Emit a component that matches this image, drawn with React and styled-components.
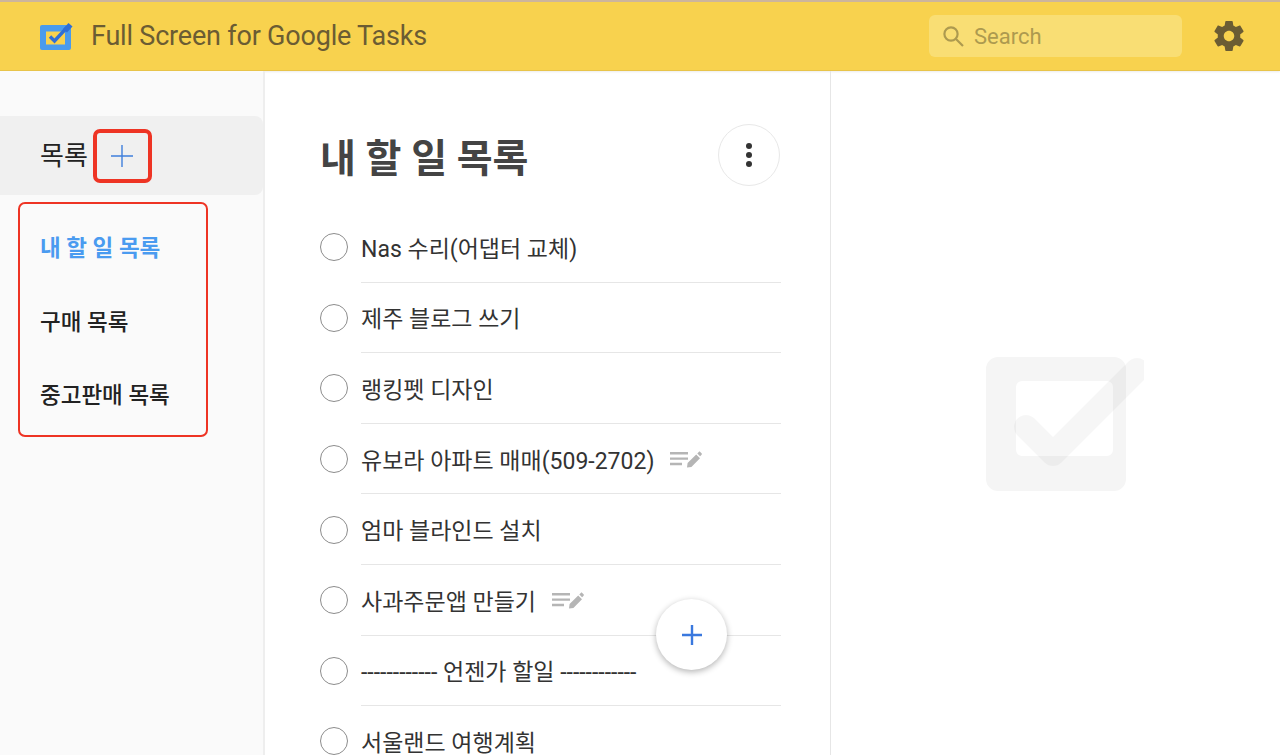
import React from "react";
import styled, { createGlobalStyle } from "styled-components";

const FONT = `Roboto, "Noto Sans CJK KR", sans-serif`;

const tasks = [
  { title: "Nas 수리(어댑터 교체)" },
  { title: "제주 블로그 쓰기" },
  { title: "랭킹펫 디자인" },
  { title: "유보라 아파트 매매(509-2702)", hasNote: true },
  { title: "엄마 블라인드 설치" },
  { title: "사과주문앱 만들기", hasNote: true },
  { title: "------------ 언젠가 할일 ------------" },
  { title: "서울랜드 여행계획" },
];

const lists = ["내 할 일 목록", "구매 목록", "중고판매 목록"];

function NoteIcon() {
  return (
    <NoteSvg viewBox="0 0 32 18">
      <path d="M0 2h18v2.4H0zM0 7.4h18v2.4H0zM0 12.8h12v2.4H0z" fill="#b5b5b5" />
      <path d="M17 17.5l.6-4.4 8.6-8.6 3.8 3.8-8.6 8.6zM27.3 3.4l1.5-1.5c.4-.4 1-.4 1.4 0l1.4 1.4c.4.4.4 1 0 1.4l-1.5 1.5z" fill="#b5b5b5" />
    </NoteSvg>
  );
}

export default function App() {
  return (
    <>
      <GlobalStyle />
      <Page>
        <Header>
          <Brand>
            <svg width="33" height="28" viewBox="0 0 33 28">
              <rect x="0" y="3" width="31" height="25" rx="2" fill="#4a9bec" />
              <rect x="6" y="9.5" width="19" height="13" fill="#f8d24e" />
              <path d="M10 14.5l4.5 4.5L27 5.5" fill="none" stroke="#2f6fd6" strokeWidth="3.4" />
              <path d="M23 7l5.5-6 4 3.6-5.5 6z" fill="#2f6fd6" />
            </svg>
            <BrandName>Full Screen for Google Tasks</BrandName>
          </Brand>
          <HeaderRight>
            <SearchBox>
              <svg width="24" height="24" viewBox="0 0 24 24" fill="none" stroke="#ad9a4f" strokeWidth="2.2">
                <circle cx="10" cy="10" r="6.6" />
                <path d="M15 15l7 7" />
              </svg>
              <SearchText>Search</SearchText>
            </SearchBox>
            <svg width="36" height="36" viewBox="0 0 24 24">
              <path
                fill="#6b5c33"
                d="M19.43 12.98c.04-.32.07-.64.07-.98s-.03-.66-.07-.98l2.11-1.65c.19-.15.24-.42.12-.64l-2-3.46c-.12-.22-.39-.3-.61-.22l-2.49 1c-.52-.4-1.08-.73-1.69-.98l-.38-2.65A.49.49 0 0 0 14 2h-4c-.25 0-.46.18-.49.42l-.38 2.65c-.61.25-1.17.59-1.69.98l-2.49-1c-.23-.09-.49 0-.61.22l-2 3.46c-.13.22-.07.49.12.64l2.11 1.65c-.04.32-.07.65-.07.98s.03.66.07.98l-2.11 1.65c-.19.15-.24.42-.12.64l2 3.46c.12.22.39.3.61.22l2.49-1c.52.4 1.08.73 1.69.98l.38 2.65c.03.24.24.42.49.42h4c.25 0 .46-.18.49-.42l.38-2.65c.61-.25 1.17-.59 1.69-.98l2.49 1c.23.09.49 0 .61-.22l2-3.46c.12-.22.07-.49-.12-.64l-2.11-1.65zM12 15.5c-1.93 0-3.5-1.57-3.5-3.5s1.57-3.5 3.5-3.5 3.5 1.57 3.5 3.5-1.57 3.5-3.5 3.5z"
              />
            </svg>
          </HeaderRight>
        </Header>
        <Body>
          <Sidebar>
            <SidebarHead>
              <SidebarTitle>목록</SidebarTitle>
              <AddListButton>
                <svg width="26" height="26" viewBox="0 0 26 26">
                  <path d="M13 2v22M2 13h22" stroke="#3f7fdc" strokeWidth="1.4" />
                </svg>
              </AddListButton>
            </SidebarHead>
            <ListBox>
              {lists.map((name, i) => (
                <ListItem key={name} $active={i === 0}>
                  {name}
                </ListItem>
              ))}
            </ListBox>
          </Sidebar>
          <Main>
            <TitleRow>
              <Title>내 할 일 목록</Title>
              <MoreButton>
                <Dot />
                <Dot />
                <Dot />
              </MoreButton>
            </TitleRow>
            <TaskList>
              {tasks.map((task) => (
                <TaskRow key={task.title}>
                  <Radio />
                  <TaskBody>
                    <TaskTitle>{task.title}</TaskTitle>
                    {task.hasNote && <NoteIcon />}
                  </TaskBody>
                </TaskRow>
              ))}
            </TaskList>
            <Fab>
              <svg width="24" height="24" viewBox="0 0 24 24">
                <path d="M12 2v20M2 12h20" stroke="#3a78de" strokeWidth="2.4" />
              </svg>
            </Fab>
          </Main>
          <Detail>
            <svg width="160" height="140" viewBox="0 0 160 140">
              <path
                fillRule="evenodd"
                fill="#f5f5f5"
                d="M14 12h116a12 12 0 0 1 12 12v110a12 12 0 0 1-12 12H14a12 12 0 0 1-12-12V24a12 12 0 0 1 12-12zM38 36a6 6 0 0 0-6 6v63a6 6 0 0 0 6 6h85a6 6 0 0 0 6-6V42a6 6 0 0 0-6-6z"
                transform="translate(0 -9)"
              />
              <path
                d="M42 73l27 27L153 16"
                fill="none"
                stroke="#000"
                strokeOpacity="0.035"
                strokeWidth="24"
                strokeLinejoin="round"
                strokeLinecap="round"
              />
            </svg>
          </Detail>
        </Body>
      </Page>
    </>
  );
}

const GlobalStyle = createGlobalStyle`
  html, body {
    margin: 0;
    padding: 0;
    background: #fff;
    font-family: ${FONT};
  }
  * {
    box-sizing: border-box;
  }
`;

const Page = styled.div`
  width: 1280px;
  height: 755px;
  overflow: hidden;
  display: flex;
  flex-direction: column;
`;

const Header = styled.header`
  height: 71px;
  flex-shrink: 0;
  display: flex;
  align-items: center;
  justify-content: space-between;
  padding: 0 33px 0 40px;
  background: #f8d24e;
  border-top: 2px solid #cdb59c;
  border-bottom: 1px solid #e8c44a;
  box-shadow: 0 1px 2px rgba(0, 0, 0, 0.08);
`;

const Brand = styled.div`
  display: flex;
  align-items: center;
  gap: 18px;
`;

const BrandName = styled.span`
  font-size: 27px;
  color: #6b5c33;
  letter-spacing: -0.2px;
`;

const HeaderRight = styled.div`
  display: flex;
  align-items: center;
  gap: 29px;
`;

const SearchBox = styled.div`
  width: 253px;
  height: 42px;
  display: flex;
  align-items: center;
  gap: 9px;
  padding: 0 12px;
  background: #f9de74;
  border-radius: 6px;
`;

const SearchText = styled.span`
  font-size: 22px;
  color: #ad9a4f;
`;

const Body = styled.div`
  flex: 1;
  min-height: 0;
  display: grid;
  grid-template-columns: 265px 566px 1fr;
`;

const Sidebar = styled.aside`
  background: #fafafa;
  border-right: 2px solid #eee;
  padding-top: 45px;
`;

const SidebarHead = styled.div`
  height: 79px;
  display: flex;
  align-items: center;
  gap: 5px;
  padding-left: 40px;
  background: #f0f0f0;
  border-radius: 0 8px 8px 0;
`;

const SidebarTitle = styled.span`
  font-size: 26px;
  line-height: 1;
  color: #222;
`;

const AddListButton = styled.div`
  width: 59px;
  height: 54px;
  display: flex;
  align-items: center;
  justify-content: center;
  border: 4px solid #ee3424;
  border-radius: 7px;
`;

const ListBox = styled.div`
  width: 190px;
  height: 235px;
  margin: 7px 0 0 18px;
  padding: 0 0 0 20px;
  display: flex;
  flex-direction: column;
  justify-content: center;
  border: 2px solid #ee3424;
  border-radius: 7px;
`;

const ListItem = styled.div`
  height: 73.5px;
  display: flex;
  align-items: center;
  font-size: 22.5px;
  font-weight: ${(p) => (p.$active ? 700 : 500)};
  color: ${(p) => (p.$active ? "#4a9bf0" : "#222")};
`;

const Main = styled.main`
  position: relative;
  border-right: 1px solid #e6e6e6;
  padding: 53px 50px 0 55px;
`;

const TitleRow = styled.div`
  display: flex;
  align-items: center;
  justify-content: space-between;
  height: 62px;
`;

const Title = styled.h1`
  margin: 0;
  font-size: 39px;
  font-weight: 700;
  color: #444;
`;

const MoreButton = styled.div`
  width: 62px;
  height: 62px;
  display: flex;
  flex-direction: column;
  align-items: center;
  justify-content: center;
  gap: 3px;
  border: 1px solid #e8e8e8;
  border-radius: 50%;
`;

const Dot = styled.span`
  width: 6px;
  height: 6px;
  border-radius: 50%;
  background: #333;
`;

const TaskList = styled.div`
  margin-top: 26px;
`;

const TaskRow = styled.div`
  height: 70.6px;
  display: flex;
  gap: 13px;
  align-items: center;
`;

const Radio = styled.span`
  flex-shrink: 0;
  width: 28px;
  height: 28px;
  border: 1.5px solid #8c8c8c;
  border-radius: 50%;
`;

const TaskBody = styled.div`
  flex: 1;
  height: 100%;
  display: flex;
  align-items: center;
  gap: 16px;
  border-bottom: 1px solid #e6e6e6;
  margin-right: -1px;
`;

const TaskTitle = styled.span`
  font-size: 23px;
  color: #333;
`;

const NoteSvg = styled.svg`
  width: 32px;
  height: 18px;
`;

const Fab = styled.div`
  position: absolute;
  left: 391px;
  top: 528px;
  width: 71px;
  height: 71px;
  display: flex;
  align-items: center;
  justify-content: center;
  background: #fff;
  border-radius: 50%;
  box-shadow: 0 2px 6px rgba(0, 0, 0, 0.3);
`;

const Detail = styled.section`
  display: flex;
  align-items: center;
  justify-content: center;
  padding: 0 0 0 17px;
`;
